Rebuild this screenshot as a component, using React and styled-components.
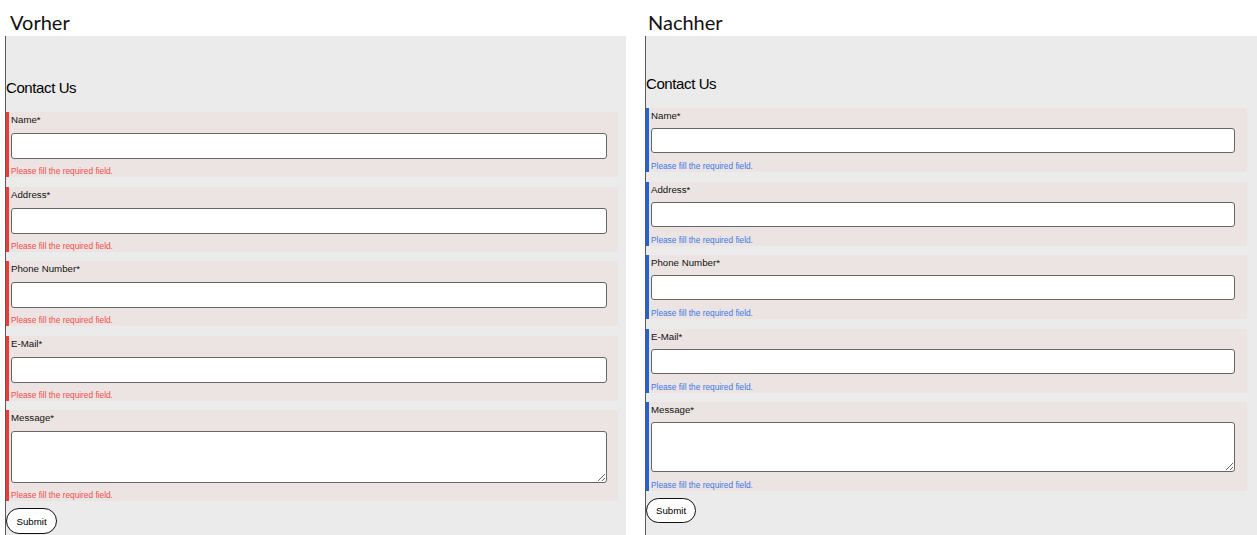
import React from "react";
import styled, { createGlobalStyle } from "styled-components";

const Global = createGlobalStyle`
  html, body { margin: 0; padding: 0; background: #ffffff; }
  body { width: 1257px; height: 535px; overflow: hidden; font-family: "Liberation Sans", Arial, sans-serif; }
  * { box-sizing: border-box; }
`;

const Page = styled.div`
  display: flex;
  align-items: stretch;
  height: 535px;
`;

const Column = styled.section`
  display: flex;
  flex-direction: column;
  margin-left: ${(p) => p.$offset}px;
  width: ${(p) => p.$width}px;
`;

const Caption = styled.div`
  height: 36px;
  padding: 10px 0 0 ${(p) => p.$indent}px;
  font-family: Lato, "Open Sans", sans-serif;
  font-size: 20px;
  line-height: 24px;
  color: #111;
`;

const Panel = styled.div`
  flex: 1;
  display: flex;
  flex-direction: column;
  background: #ebebeb;
  border-left: 1px solid #5a5a5a;
  padding-top: ${(p) => p.$top}px;
  padding-right: ${(p) => p.$right}px;
`;

const Heading = styled.h2`
  margin: 0 0 16px 0;
  font-family: "Liberation Sans", Arial, sans-serif;
  font-weight: normal;
  font-size: 15px;
  line-height: 17px;
  letter-spacing: -0.4px;
  color: #000;
`;

const Fields = styled.div`
  display: flex;
  flex-direction: column;
  gap: 9.5px;
`;

const Group = styled.div`
  display: flex;
  flex-direction: column;
  background: #ece4e2;
  border-left: 3px solid ${(p) => p.$accent};
  padding: 2px ${(p) => p.$padRight}px 1px 2px;
`;

const Label = styled.label`
  font-size: 9.7px;
  line-height: 11px;
  color: #111;
  margin-bottom: ${(p) => p.$gap}px;
`;

const Input = styled.input`
  display: block;
  width: 100%;
  height: ${(p) => p.$h}px;
  margin: 0;
  border: 1px solid #666;
  border-radius: 3px;
  background: #fff;
  font-family: "Liberation Sans", Arial, sans-serif;
  outline: none;
`;

const TextArea = styled.textarea`
  display: block;
  width: 100%;
  height: ${(p) => p.$h}px;
  margin: 0;
  border: 1px solid #666;
  border-radius: 3px;
  background: #fff;
  resize: vertical;
  font-family: "Liberation Sans", Arial, sans-serif;
  outline: none;
`;

const ErrorText = styled.div`
  margin-top: ${(p) => p.$gap}px;
  font-size: 8.3px;
  line-height: 10px;
  color: ${(p) => p.$color};
`;

const Submit = styled.button`
  align-self: flex-start;
  margin-top: 7px;
  width: ${(p) => p.$w}px;
  height: ${(p) => p.$h}px;
  padding: 0;
  background: #fff;
  border: 1.5px solid #111;
  border-radius: 14px;
  font-family: "Liberation Sans", Arial, sans-serif;
  font-size: 9.7px;
  color: #000;
`;

const fields = [
  { label: "Name*" },
  { label: "Address*" },
  { label: "Phone Number*" },
  { label: "E-Mail*" },
  { label: "Message*", area: true },
];

function ContactForm({ v }) {
  return (
    <Panel $top={v.top} $right={v.right}>
      <Heading>Contact Us</Heading>
      <Fields>
        {fields.map((f) => (
          <Group key={f.label} $accent={v.accent} $padRight={v.padRight}>
            <Label $gap={v.labelGap}>{f.label}</Label>
            {f.area ? <TextArea $h={v.areaH} /> : <Input $h={v.inputH} />}
            <ErrorText $gap={v.errGap} $color={v.error}>
              Please fill the required field.
            </ErrorText>
          </Group>
        ))}
      </Fields>
      <Submit $w={v.btnW} $h={v.btnH}>Submit</Submit>
    </Panel>
  );
}

const before = {
  top: 43,
  right: 8,
  padRight: 11,
  accent: "#ee3b36",
  error: "#ee4c4c",
  labelGap: 8,
  inputH: 26,
  areaH: 52,
  errGap: 7,
  btnW: 51,
  btnH: 26,
};

const after = {
  top: 39,
  right: 10,
  padRight: 12,
  accent: "#1f63d6",
  error: "#3a78e6",
  labelGap: 7,
  inputH: 25,
  areaH: 50,
  errGap: 8,
  btnW: 50,
  btnH: 25,
};

export default function App() {
  return (
    <>
      <Global />
      <Page>
        <Column $offset={5} $width={621}>
          <Caption $indent={5}>Vorher</Caption>
          <ContactForm v={before} />
        </Column>
        <Column $offset={19} $width={612}>
          <Caption $indent={3}>Nachher</Caption>
          <ContactForm v={after} />
        </Column>
      </Page>
    </>
  );
}
